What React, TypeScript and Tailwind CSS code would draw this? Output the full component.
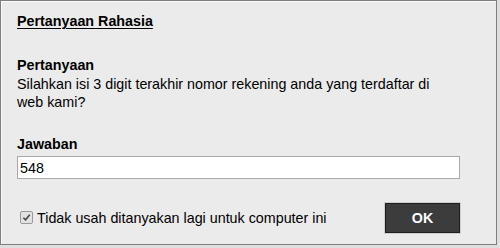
export default function App() {
  return (
    <div className="w-[500px] h-[248px] bg-[#dedede] font-['Liberation_Sans',Arial,sans-serif] text-[14.3px] leading-[18px] text-black">
      <div className="w-[497px] h-[245px] border border-[#7f7f7f] bg-[#ebebeb] shadow-[inset_1px_1px_0_#fafafa] pl-[16px] pr-[37px] pt-[11px] flex flex-col">
        <h1 className="font-bold underline underline-offset-[2px]">Pertanyaan Rahasia</h1>

        <div className="mt-[26px] font-bold">Pertanyaan</div>
        <p className="mt-[1px] max-w-[436px]">
          Silahkan isi 3 digit terakhir nomor rekening anda yang terdaftar di web kami?
        </p>

        <label className="mt-[24px] font-bold">Jawaban</label>
        <input
          type="text"
          defaultValue="548"
          className="mt-[3px] h-[23px] w-[443px] border border-[#a9a9a9] bg-white px-[2px] outline-none"
        />

        <div className="mt-[24px] flex items-center justify-between">
          <label className="flex items-center pl-[3px] mt-[-1px]">
            <span className="w-[13px] h-[13px] border border-[#9a9a9a] rounded-[2px] bg-[#e2e2e2] flex items-center justify-center">
              <svg viewBox="0 0 10 10" className="w-[9px] h-[9px]">
                <path d="M1.5 5.2 L4 7.6 L8.6 2" fill="none" stroke="#444" strokeWidth="1.7" />
              </svg>
            </span>
            <span className="ml-[4px]">Tidak usah ditanyakan lagi untuk computer ini</span>
          </label>
          <button className="w-[75px] h-[30px] bg-[#3c3c3c] border border-[#1e1e1e] shadow-[0_0_0_1px_#cfcfcf] text-white font-bold mr-[-1px]">
            OK
          </button>
        </div>
      </div>
    </div>
  );
}
